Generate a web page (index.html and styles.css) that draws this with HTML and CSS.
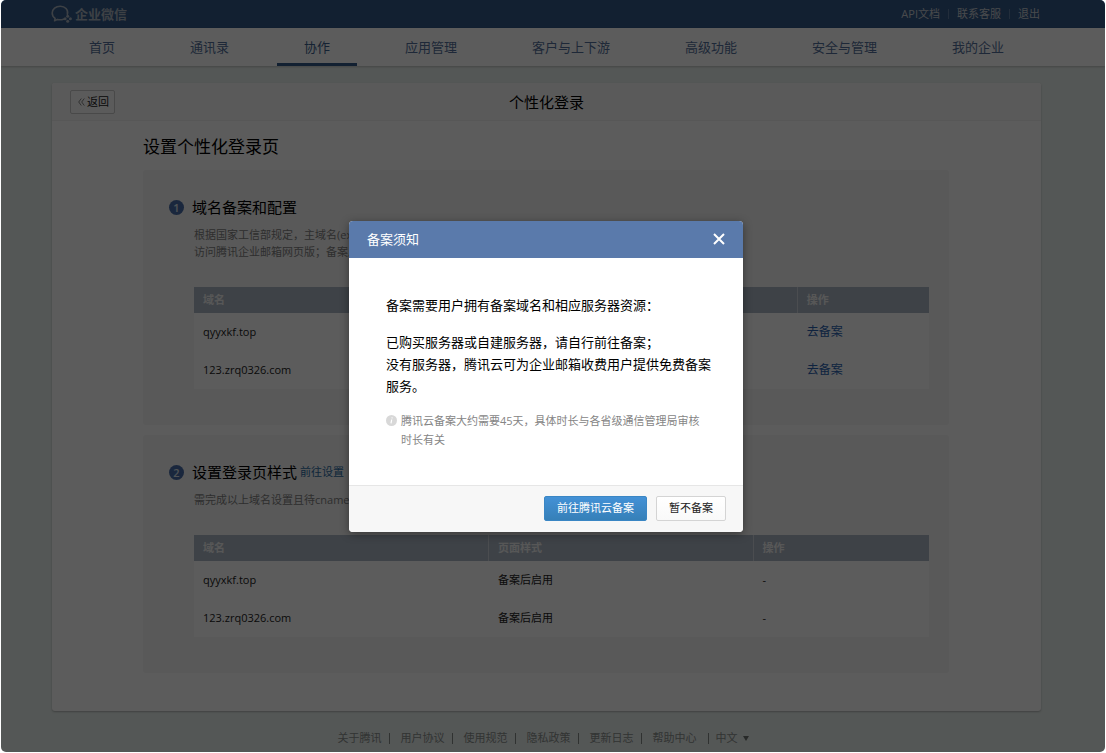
FILE: index.html
```
<!DOCTYPE html>
<html lang="zh-CN">
<head>
<meta charset="utf-8">
<title>个性化登录</title>
<meta name="viewport" content="width=device-width, initial-scale=1">
<link rel="stylesheet" href="styles.css">
</head>
<body>
<div class="app">
  <header class="topbar">
    <a class="logo" href="#">
      <svg class="logo-icon" viewBox="0 0 22 18" aria-hidden="true">
        <path d="M16.4 9.2C17.6 4.8 14 1.2 9.3 1.2 4.800 1.200 1.200 4.200 1.200 8c0 2.200 1.100 4.100 2.900 5.300L3.600 15.800l2.900-1.400c2 .6 4.200.5 6-.2" fill="none" stroke="currentColor" stroke-width="1.600" stroke-linecap="round" stroke-linejoin="round"/>
        <g fill="currentColor"><circle cx="16.700" cy="11.300" r="1.500"/><circle cx="19.400" cy="13.700" r="1.500"/><circle cx="16.700" cy="16.200" r="1.500"/><circle cx="14.100" cy="13.700" r="1.500"/></g>
      </svg>
      <span>企业微信</span>
    </a>
    <nav class="toplinks" aria-label="账户">
      <a href="#">API文档</a>
      <a href="#">联系客服</a>
      <a href="#">退出</a>
    </nav>
  </header>

  <nav class="mainnav" aria-label="主导航">
    <a href="#">首页</a>
    <a href="#">通讯录</a>
    <a class="current" href="#" aria-current="page">协作</a>
    <a href="#">应用管理</a>
    <a href="#">客户与上下游</a>
    <a href="#">高级功能</a>
    <a href="#">安全与管理</a>
    <a href="#">我的企业</a>
  </nav>

  <main class="page">
    <div class="card">
      <div class="card-head">
        <button class="back" type="button"><svg viewBox="0 0 7 8" aria-hidden="true"><path d="M3.300.5.700 4l2.600 3.500M6.300.5 3.700 4l2.600 3.500" fill="none" stroke="currentColor" stroke-width=".8"/></svg>返回</button>
        <h1>个性化登录</h1>
      </div>
      <div class="card-body">
        <h2>设置个性化登录页</h2>

        <section class="step">
          <h3><span class="num">1</span>域名备案和配置</h3>
          <div class="step-content">
            <p class="desc">根据国家工信部规定，主域名(ex<br>访问腾讯企业邮箱网页版；备案后</p>
            <table class="grid">
              <colgroup><col class="w-wide"><col class="w-rest"><col class="w-narrow"></colgroup>
              <thead><tr><th>域名</th><th></th><th>操作</th></tr></thead>
              <tbody>
                <tr><td>qyyxkf.top</td><td></td><td><a class="action" href="#">去备案</a></td></tr>
                <tr><td>123.zrq0326.com</td><td></td><td><a class="action" href="#">去备案</a></td></tr>
              </tbody>
            </table>
          </div>
        </section>

        <section class="step">
          <h3><span class="num">2</span>设置登录页样式<a class="setup" href="#">前往设置</a></h3>
          <div class="step-content">
            <p class="desc">需完成以上域名设置且待cname</p>
            <table class="grid">
              <colgroup><col class="w-wide"><col class="w-style"><col></colgroup>
              <thead><tr><th>域名</th><th>页面样式</th><th>操作</th></tr></thead>
              <tbody>
                <tr><td>qyyxkf.top</td><td>备案后启用</td><td>-</td></tr>
                <tr><td>123.zrq0326.com</td><td>备案后启用</td><td>-</td></tr>
              </tbody>
            </table>
          </div>
        </section>
      </div>
    </div>
  </main>

  <footer class="footer">
    <a href="#">关于腾讯</a>
    <a href="#">用户协议</a>
    <a href="#">使用规范</a>
    <a href="#">隐私政策</a>
    <a href="#">更新日志</a>
    <a class="help" href="#">帮助中心</a>
    <button class="lang" type="button">中文<i class="caret"></i></button>
  </footer>

  <div class="overlay">
    <div class="modal" role="dialog" aria-modal="true" aria-labelledby="modal-title">
      <div class="modal-head">
        <h2 id="modal-title">备案须知</h2>
        <button class="close" type="button" aria-label="关闭"><svg viewBox="0 0 12 12" aria-hidden="true"><path d="M1 1l10 10M11 1 1 11" stroke="currentColor" stroke-width="2" fill="none"/></svg></button>
      </div>
      <div class="modal-body">
        <p>备案需要用户拥有备案域名和相应服务器资源：</p>
        <p>已购买服务器或自建服务器，请自行前往备案；<br>没有服务器，腾讯云可为企业邮箱收费用户提供免费备案服务。</p>
        <div class="note">
          <svg viewBox="0 0 11 11" aria-hidden="true"><circle cx="5.500" cy="5.500" r="5.500" fill="#d8d8d8"/><path d="M5.700 4.500 5 8.400M6.200 2.300 6 3.400" stroke="#fff" stroke-width="1.200"/></svg>
          <span>腾讯云备案大约需要45天，具体时长与各省级通信管理局审核时长有关</span>
        </div>
      </div>
      <div class="modal-foot">
        <button class="btn btn-primary" type="button">前往腾讯云备案</button>
        <button class="btn" type="button">暂不备案</button>
      </div>
    </div>
  </div>
</div>
</body>
</html>
```

FILE: styles.css
```
* { box-sizing: border-box; }

body {
  margin: 0;
  background: #fff;
  color: #000;
  font: 11px/18px "Open Sans", "Noto Sans CJK SC", sans-serif;
}

h1, h2, h3, p { margin: 0; font-weight: 400; }
a { color: inherit; text-decoration: none; }
button { font: inherit; color: inherit; cursor: pointer; }
svg { display: block; flex: none; }

.app {
  position: relative;
  display: flex;
  flex-direction: column;
  min-height: calc(100vh - 1px);
  margin: 0 1px 1px;
  border-radius: 5px;
  overflow: hidden;
  background: #e9f0ed;
}

/* top bar */
.topbar {
  display: flex;
  align-items: center;
  justify-content: space-between;
  height: 28px;
  padding: 0 65px 0 50px;
  background: #325988;
  color: #c8cdd3;
}
.logo {
  display: flex;
  align-items: center;
  gap: 2px;
  color: #aab4c0;
  font-size: 13px;
  font-weight: 700;
}
.logo-icon { width: 22px; height: 18px; }
.toplinks { display: flex; align-items: center; }
.toplinks a + a {
  display: flex;
  align-items: center;
  margin-left: 8px;
}
.toplinks a + a::before {
  content: "";
  height: 10px;
  margin-right: 8px;
  border-left: 1px solid #5f7da3;
}

/* main navigation */
.mainnav {
  display: flex;
  justify-content: center;
  gap: 21px;
  height: 38px;
  padding-right: 13px;
  background: #fff;
  box-shadow: 0 1px 2px rgba(0, 0, 0, .2);
  color: #54709b;
  font-size: 13px;
  line-height: 38px;
}
.mainnav a { padding: 0 27px; white-space: nowrap; }
.mainnav .current { border-bottom: 3px solid #325988; color: #3c5f8e; }

/* content card */
.page { padding: 17px 64px 0 51px; }
.card {
  border-radius: 3px;
  background: #fff;
  box-shadow: 0 1px 2px rgba(0, 0, 0, .25);
}
.card-head {
  display: grid;
  grid-template-columns: 1fr auto 1fr;
  align-items: center;
  height: 38px;
  padding: 0 18px;
  border-bottom: 1px solid #f0f0f0;
  border-radius: 3px 3px 0 0;
  background: #fafafa;
}
.card-head h1 { font-size: 15px; }
.back {
  display: flex;
  align-items: center;
  justify-self: start;
  gap: 2px;
  height: 24px;
  padding: 0 5px 0 7px;
  border: 1px solid #c9c9c9;
  border-radius: 2px;
  background: #fcfcfc;
  color: #222;
}
.back svg { width: 7px; height: 8px; color: #666; }

.card-body { padding: 14px 92px 38px 91px; }
.card-body h2 { margin-bottom: 11px; font-size: 17px; line-height: 24px; }

.step {
  padding: 26px 20px 36px 26px;
  border-radius: 3px;
  background: #f6f6f6;
}
.step + .step { margin-top: 10px; }
.step h3 {
  display: flex;
  align-items: center;
  font-size: 15px;
  line-height: 22px;
}
.num {
  width: 15px;
  height: 15px;
  margin-right: 8px;
  border-radius: 50%;
  background: #4a6ea8;
  color: #dde3ec;
  font-size: 11px;
  font-weight: 600;
  line-height: 15px;
  text-align: center;
}
.setup { margin-left: 3px; color: #2d6ba3; font-size: 11px; }
.step-content { padding: 8px 0 0 25px; }
.desc { margin-bottom: 27px; color: #808080; line-height: 17px; white-space: nowrap; }

.grid {
  width: 100%;
  border-collapse: separate;
  border-spacing: 0;
  table-layout: fixed;
  background: #fff;
}
.grid th, .grid td { padding: 0 9px; text-align: left; }
.grid th {
  height: 26px;
  background: #acb7c5;
  color: #f2f2f2;
  font-weight: 700;
}
.grid th + th { border-left: 1px solid #cfd5dd; }
.grid td { height: 38px; color: #222; }
.grid td + td { padding-left: 10px; }
.w-wide { width: 40%; }
.w-rest { width: 42%; }
.w-style { width: 36%; }
.w-narrow { width: 18%; }
.action { color: #2a62b0; font-size: 12px; }

/* footer */
.footer {
  display: flex;
  justify-content: center;
  padding: 18px 20px 5px 0;
  color: #8a8f8d;
}
.footer a { display: flex; align-items: center; margin-right: 11px; }
.footer a::after {
  content: "";
  height: 11px;
  margin-left: 7px;
  border-left: 1px solid #858a88;
}
.footer .help { margin-right: 7px; }
.footer .help::after { margin-left: 11px; }
.lang {
  display: flex;
  align-items: center;
  gap: 5px;
  padding: 0;
  border: 0;
  background: none;
}
.caret {
  border: 3px solid transparent;
  border-top: 5px solid #707472;
  border-bottom: 0;
}

/* dialog */
.overlay {
  position: absolute;
  inset: 0;
  display: flex;
  align-items: center;
  justify-content: center;
  padding-right: 14px;
  background: rgba(0, 0, 0, .64);
}
.modal {
  width: 394px;
  border-radius: 4px;
  overflow: hidden;
  background: #fff;
  box-shadow: 0 2px 10px rgba(0, 0, 0, .4);
}
.modal-head {
  display: flex;
  align-items: center;
  justify-content: space-between;
  height: 37px;
  padding: 0 18px;
  background: #5a7aab;
  color: #fff;
}
.modal-head h2 { font-size: 13px; }
.close { padding: 0; border: 0; background: none; }
.close svg { width: 12px; height: 12px; }
.modal-body { padding: 36px 30px 36px 37px; font-size: 13px; line-height: 22px; }
.modal-body p + p { margin-top: 15px; }
.note {
  display: flex;
  gap: 4px;
  margin-top: 14px;
  padding-right: 8px;
  color: #858585;
  font-size: 11px;
  line-height: 19px;
}
.note svg { width: 11px; height: 11px; margin-top: 4px; }
.modal-foot {
  display: flex;
  justify-content: flex-end;
  gap: 9px;
  padding: 10px 17px 11px;
  border-top: 1px solid #e6e6e6;
  background: #f7f7f7;
}
.btn {
  height: 25px;
  padding: 0 12px;
  border: 1px solid #d4d4d4;
  border-radius: 2px;
  background: linear-gradient(#fff, #f9f9f9);
  color: #222;
}
.btn-primary {
  border-color: #3a86c4;
  background: linear-gradient(#4391d6, #3680b8);
  color: #fff;
}
```
